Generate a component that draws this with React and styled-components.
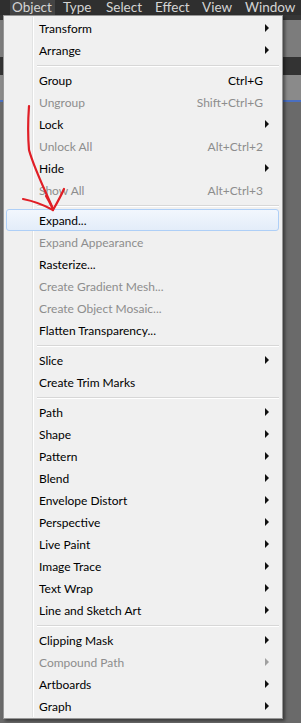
import React from "react"
import styled, { createGlobalStyle } from "styled-components"

const Global = createGlobalStyle`
  html, body { margin: 0; padding: 0; background: #5c5c5c; }
  body { font-family: "Lato", "Noto Sans", sans-serif; }
`

const Screen = styled.div`
  width: 301px;
  height: 723px;
  overflow: hidden;
  display: grid;
  grid-template-rows: 15px 1fr;
  background: #5c5c5c;
`

const MenuBar = styled.div`
  display: flex;
  align-items: stretch;
  background: #2f2f2f;
  padding-left: 10px;
`

const BarItem = styled.div`
  flex: none;
  box-sizing: border-box;
  width: ${p => p.$w}px;
  margin-right: ${p => p.$gap}px;
  padding-left: 2px;
  font-size: 13.5px;
  line-height: 15px;
  white-space: nowrap;
  color: #d4d4d4;
  background: ${p => (p.$active ? "#444" : "transparent")};
`

const Workspace = styled.div`
  position: relative;
  background:
    linear-gradient(#363636 0 5px, #7c7c7c 5px 42px, #333 42px 60px, #8a8a8a 60px 85px, #4a6fc0 85px 87px, #6a6a6a 87px 100%);
  padding-left: 3px;
`

const Menu = styled.div`
  box-sizing: border-box;
  width: 280px;
  background: #f0f0f0;
  border: 1px solid #979797;
  box-shadow: 2px 2px 3px rgba(0, 0, 0, 0.45);
  padding: 1px 3px 1px 2px;
  position: relative;
  &::before {
    content: "";
    position: absolute;
    top: 1px;
    bottom: 1px;
    left: 28px;
    width: 1px;
    background: #e2e3e3;
    box-shadow: 1px 0 0 #fff;
  }
`

const Row = styled.div`
  position: relative;
  z-index: 1;
  display: flex;
  align-items: center;
  height: 22px;
  box-sizing: border-box;
  padding: 0 9px 0 32px;
  font-size: 12px;
  color: ${p => (p.$disabled ? "#8d8d8d" : "#000")};
  border: 1px solid ${p => (p.$hover ? "#aecff7" : "transparent")};
  border-radius: 3px;
  background: ${p => (p.$hover ? "linear-gradient(#f2f7fd, #e3edf9)" : "transparent")};
`

const Label = styled.span`
  flex: 1;
  white-space: nowrap;
`

const Shortcut = styled.span`
  margin-right: 6px;
  white-space: nowrap;
`

const Arrow = styled.span`
  width: 0;
  height: 0;
  border-top: 4px solid transparent;
  border-bottom: 4px solid transparent;
  border-left: 4px solid ${p => (p.$disabled ? "#a0a0a0" : "#111")};
`

const Separator = styled.div`
  height: 8px;
  display: flex;
  align-items: center;
  padding-left: 31px;
  &::after {
    content: "";
    flex: 1;
    height: 1px;
    background: #d7d7d7;
    box-shadow: 0 1px 0 #fff;
  }
`

const Annotation = styled.svg`
  position: absolute;
  left: 0;
  top: -15px;
  z-index: 2;
  pointer-events: none;
`

const groups = [
  [
    { label: "Transform", sub: true },
    { label: "Arrange", sub: true },
  ],
  [
    { label: "Group", key: "Ctrl+G" },
    { label: "Ungroup", key: "Shift+Ctrl+G", off: true },
    { label: "Lock", sub: true },
    { label: "Unlock All", key: "Alt+Ctrl+2", off: true },
    { label: "Hide", sub: true },
    { label: "Show All", key: "Alt+Ctrl+3", off: true },
  ],
  [
    { label: "Expand...", hover: true },
    { label: "Expand Appearance", off: true },
    { label: "Rasterize..." },
    { label: "Create Gradient Mesh...", off: true },
    { label: "Create Object Mosaic...", off: true },
    { label: "Flatten Transparency..." },
  ],
  [
    { label: "Slice", sub: true },
    { label: "Create Trim Marks" },
  ],
  [
    { label: "Path", sub: true },
    { label: "Shape", sub: true },
    { label: "Pattern", sub: true },
    { label: "Blend", sub: true },
    { label: "Envelope Distort", sub: true },
    { label: "Perspective", sub: true },
    { label: "Live Paint", sub: true },
    { label: "Image Trace", sub: true },
    { label: "Text Wrap", sub: true },
    { label: "Line and Sketch Art", sub: true },
  ],
  [
    { label: "Clipping Mask", sub: true },
    { label: "Compound Path", sub: true, off: true },
    { label: "Artboards", sub: true },
    { label: "Graph", sub: true },
  ],
]

const bar = [
  { t: "Object", w: 45, gap: 6, active: true },
  { t: "Type", w: 43, gap: 0 },
  { t: "Select", w: 49, gap: 0 },
  { t: "Effect", w: 47, gap: 0 },
  { t: "View", w: 43, gap: 0 },
  { t: "Window", w: 60, gap: 0 },
]

export default function App() {
  return (
    <Screen>
      <Global />
      <MenuBar>
        {bar.map(b => (
          <BarItem key={b.t} $w={b.w} $gap={b.gap} $active={b.active}>{b.t}</BarItem>
        ))}
      </MenuBar>
      <Workspace>
        <Menu>
          {groups.map((g, gi) => (
            <React.Fragment key={gi}>
              {gi > 0 && <Separator />}
              {g.map(it => (
                <Row key={it.label} $disabled={it.off} $hover={it.hover}>
                  <Label>{it.label}</Label>
                  {it.key && <Shortcut>{it.key}</Shortcut>}
                  {it.sub && <Arrow $disabled={it.off} />}
                </Row>
              ))}
            </React.Fragment>
          ))}
        </Menu>
        <Annotation width="80" height="230" viewBox="0 0 80 230">
          <g fill="none" stroke="#e01e26" strokeWidth="2.2" strokeLinecap="round" strokeLinejoin="round">
            <path d="M29 106 C28 120 28 138 29 150 C34 168 44 188 53 209" />
            <path d="M23 199 C33 201 44 205 53 210" />
            <path d="M64 189 C61 196 57 203 53 210" />
            <path d="M46 196 C49 201 51 205 53 209" />
          </g>
        </Annotation>
      </Workspace>
    </Screen>
  )
}
